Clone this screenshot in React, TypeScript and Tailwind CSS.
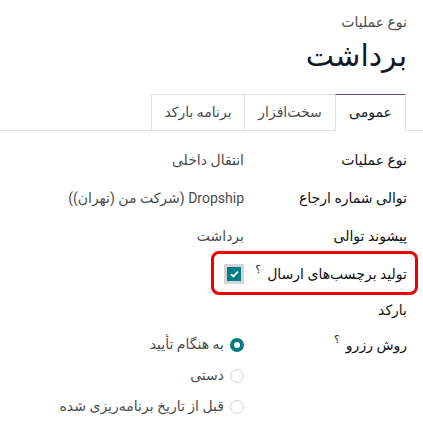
import React from 'react';

const Help = () => <sup className="text-[11px] text-[#212529] font-normal mr-[6px]">؟</sup>;

export default function App() {
  const rows = [
    { label: 'نوع عملیات', value: 'انتقال داخلی' },
    { label: 'توالی شماره ارجاع', value: 'Dropship (شرکت من (تهران))' },
    { label: 'پیشوند توالی', value: 'برداشت' },
  ];

  return (
    <div dir="rtl" className="w-[423px] h-[445px] bg-white text-[#212529] font-['Roboto','DejaVu_Sans',sans-serif] overflow-hidden">
      {/* Title */}
      <div className="pr-4 pt-[10px]">
        <div className="text-[14px] text-[#4c4c4c] leading-[24px]">نوع عملیات</div>
        <div className="text-[30px] leading-[44px] text-[#111827]">برداشت</div>
      </div>

      {/* Tabs */}
      <div className="mt-[16px] flex border-b border-[#dee2e6] pr-[17px] h-[37px] items-end">
        <div className="h-[37px] px-4 flex items-center border border-[#dee2e6] border-t-[#714b67] border-b-white -mb-px bg-white text-[14px] text-[#111827] w-[71px] justify-center">عمومی</div>
        <div className="h-[36px] flex items-center justify-center border-t border-l border-[#dee2e6] w-[91px] text-[14px] text-[#4c4c4c]">سخت‌افزار</div>
        <div className="h-[36px] flex items-center justify-center border-t border-l border-[#dee2e6] w-[93px] text-[14px] text-[#4c4c4c]">برنامه بارکد</div>
      </div>

      {/* Form */}
      <div className="pr-4 pt-[10px]">
        {rows.map((r) => (
          <div key={r.label} className="flex h-[38px] items-center">
            <div className="w-[163px] text-[14px] text-[#111] whitespace-nowrap">{r.label}</div>
            <div className="text-[14px] text-[#4c4c4c]">{r.value}</div>
          </div>
        ))}

        <div className="relative flex h-[38px] items-center">
          <div className="w-[163px] text-[14px] text-[#111] whitespace-nowrap">
            تولید برچسب‌های ارسال<Help />
          </div>
          <div className="w-[20px] h-[20px] bg-[#d8d3d8] flex items-center justify-center">
            <div className="w-[14px] h-[14px] bg-[#017e84] flex items-center justify-center">
              <svg width="9" height="8" viewBox="0 0 9 8"><path d="M1 4.2 L3.4 6.4 L8 1.6" stroke="white" strokeWidth="1.8" fill="none" /></svg>
            </div>
          </div>
          <div className="absolute -right-[11px] -top-[4px] w-[207px] h-[44px] border-[3px] border-[#ee0000] rounded-[8px]" />
        </div>

        <div className="h-[34px] flex items-center text-[14px] text-[#111]">بارکد</div>

        <div className="flex pt-[2px]">
          <div className="w-[163px] text-[14px] text-[#111] h-[32px] flex items-center">
            <span>روش رزرو</span><Help />
          </div>
          <div className="flex flex-col text-[14px] text-[#4c4c4c]">
            {['به هنگام تأیید', 'دستی', 'قبل از تاریخ برنامه‌ریزی شده'].map((o, i) => (
              <div key={o} className="h-[31px] flex items-center gap-[6px]">
                {i === 0 ? (
                  <div className="w-[14px] h-[14px] rounded-full border-[4px] border-[#017e84] bg-white" />
                ) : (
                  <div className="w-[14px] h-[14px] rounded-full border border-[#ced4da] bg-white" />
                )}
                <span>{o}</span>
              </div>
            ))}
          </div>
        </div>
      </div>
    </div>
  );
}
